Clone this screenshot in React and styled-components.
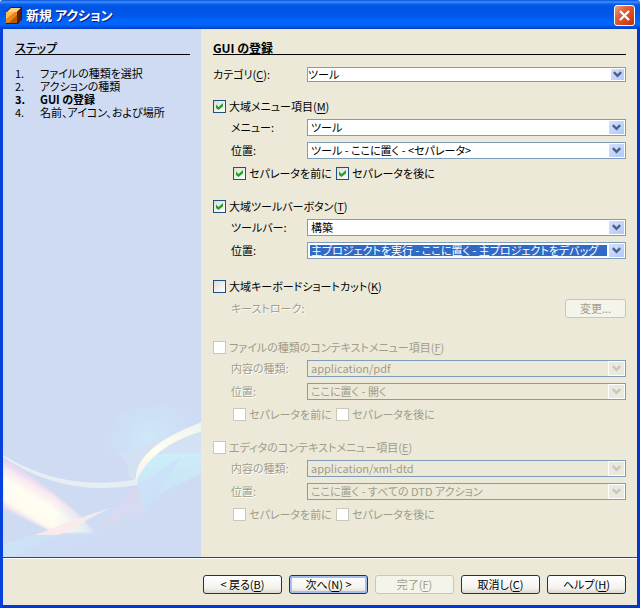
import React, { useId } from "react";
import styled, { createGlobalStyle, css } from "styled-components";

const ink = "#000";
const faded = "#9f9d89";
const face = "#ece9d8";

const GlobalStyle = createGlobalStyle`
  *, *::before, *::after { box-sizing: border-box; }
  body { margin: 0; background: #c8d6f2; }
  body, button, select, input {
    font-family: "Noto Sans CJK JP", sans-serif;
    font-size: 12px;
    font-feature-settings: "palt";
  }
  u { text-underline-offset: 2px; text-decoration-thickness: 1px; }
`;

const Window = styled.div`
  display: flex;
  flex-direction: column;
  min-height: 100vh;
  color: ${ink};
  line-height: 13px;
  background: ${face};
  border: 3px solid #0842dc;
  border-top: 0;
  border-right-color: #0535d0;
  border-bottom-color: #0338d8;
  border-radius: 4px 4px 0 0;
`;

const TitleBar = styled.header`
  display: flex;
  align-items: center;
  gap: 4px;
  height: 29px;
  margin: 0 -3px;
  padding: 1px 5px 0 6px;
  border-radius: 4px 4px 0 0;
  background: linear-gradient(#0a50d8 0, #3c93ff 2px, #0a62f0 4px, #0054e3 7px, #0058ea 15px, #0066ff 22px, #0064fa 25px, #0046d0 28px, #003fc4 29px);
`;

const WindowTitle = styled.h1`
  flex: 1;
  margin: 0;
  color: #fff;
  font-size: 13px;
  line-height: 16px;
  text-shadow: 1px 1px 0 #0a1883;
`;

const CloseButton = styled.button`
  display: grid;
  place-items: center;
  width: 21px;
  height: 21px;
  padding: 0;
  border: 1px solid #fff;
  border-radius: 3px;
  background: linear-gradient(135deg, #f0a088, #e1603a 35%, #d8441a 70%, #b83010);
`;

const Body = styled.div`
  display: flex;
  flex: 1;
`;

const Sidebar = styled.aside`
  display: flex;
  flex-direction: column;
  flex: 0 0 198px;
  padding-top: 12px;
  background: #cfdbf3;
`;

const Heading = styled.h2`
  height: 14px;
  margin: 0;
  border-bottom: 1px solid #000;
  font-size: 12px;
  line-height: 13px;
  font-weight: ${(p) => (p.$light ? 500 : 700)};
`;

const Steps = styled.section`
  padding: 0 11px 0 12px;
`;

const StepList = styled.ol`
  list-style: none;
  margin: 12px 0 0;
  padding: 0;
`;

const Step = styled.li`
  display: grid;
  grid-template-columns: 25px 1fr;
  font-size: 11px;
  white-space: nowrap;
  font-weight: ${(p) => (p.$current ? 700 : 400)};
`;

const Swoosh = styled.svg`
  display: block;
  width: 100%;
  margin-top: auto;
`;

const Main = styled.main`
  flex: 1;
  min-width: 0;
  padding: 12px 11px 16px 12px;
`;

const Field = styled.div`
  display: grid;
  grid-template-columns: ${(p) => (p.$top ? "94px" : "76px")} 1fr;
  align-items: center;
  margin-top: ${(p) => (p.$top ? 12 : 6)}px;
  margin-left: ${(p) => (p.$top ? 0 : 18)}px;
`;

const FieldLabel = styled.label`
  font-size: 11px;
  white-space: nowrap;
  ${(p) => p.$off && css`color: ${faded}; text-shadow: 1px 1px 0 #fff;`}
`;

const SelectFrame = styled.div`
  position: relative;
  display: flex;
  height: ${(p) => (p.$short ? 15 : 17)}px;
  border: 1px solid #7f9db9;
  background: ${(p) => (p.$off ? face : "#fff")};
`;

const Select = styled.select`
  appearance: none;
  width: 100%;
  height: 100%;
  margin: 0;
  padding: 0 18px 0 ${(p) => (p.$short ? 0 : 3)}px;
  border: 0;
  outline: 0;
  border-radius: 0;
  font-size: 11px;
  line-height: 13px;
  color: ${ink};
  background: transparent;
  opacity: 1;
  &:disabled { color: ${faded}; opacity: 1; }
  ${(p) => p.$active && css`
    color: #fff;
    padding: 0 0 0 1px;
    margin: 2px 18px 2px 2px;
    width: calc(100% - 20px);
    height: 11px;
    line-height: 11px;
    background: #316ac5;
  `}
`;

const ArrowBox = styled.span`
  position: absolute;
  top: 0;
  right: 0;
  bottom: 0;
  display: grid;
  place-items: center;
  width: ${(p) => (p.$short ? 14 : 17)}px;
  border: solid #fff;
  border-width: ${(p) => (p.$short ? "1px 1px 1px 0" : "1px")};
  background: ${(p) => (p.$off ? "#ebe9dd" : "linear-gradient(135deg, #d5e1fd, #b3c8f7)")};
  color: ${(p) => (p.$off ? "#c8c7bb" : "#4d6185")};
  pointer-events: none;
`;

const Group = styled.fieldset`
  min-width: 0;
  margin: ${(p) => p.$space}px 0 0;
  padding: 0;
  border: 0;
`;

const CheckLabel = styled.label`
  display: flex;
  align-items: center;
  gap: 3px;
  height: 13px;
  font-size: 11px;
  white-space: nowrap;
  color: ${(p) => (p.$off ? faded : ink)};
`;

const CheckInput = styled.input`
  appearance: none;
  flex: none;
  display: grid;
  place-items: center;
  width: 13px;
  height: 13px;
  margin: 0;
  border: 1px solid #1c5180;
  background: linear-gradient(135deg, #dcdcd7, #fff);
  &:checked::before {
    content: "";
    width: 7px;
    height: 7px;
    background: #21a121;
    clip-path: polygon(0 22%, 36% 56%, 100% 0, 100% 46%, 36% 100%, 0 70%);
  }
  &:disabled { border-color: #cac8bb; background: #fff; }
`;

const CheckPair = styled.div`
  display: grid;
  grid-template-columns: 103px 1fr;
  margin: 8px 0 0 20px;
`;

const Button = styled.button`
  flex: none;
  width: ${(p) => (p.$small ? 61 : 79)}px;
  height: 19px;
  padding: 0;
  border: 1px solid #003c74;
  border-radius: 3px;
  color: ${ink};
  font-size: 11px;
  line-height: 15px;
  white-space: nowrap;
  background: linear-gradient(#fff, #f4f3ee 70%, #dcd8cc);
  justify-self: end;
  ${(p) => p.$primary && css`box-shadow: inset 0 0 0 2px #a5bef0;`}
  &:disabled { color: ${faded}; border-color: #c9c7ba; background: #f5f4ea; }
`;

const Footer = styled.footer`
  display: flex;
  justify-content: flex-end;
  gap: 7px;
  padding: 17px 11px 11px;
  border-top: 1px solid #444;
  box-shadow: inset 0 1px 0 #fff;
`;

function Mnemonic({ text, letter, colon }) {
  return <span>{text}(<u>{letter}</u>){colon && ":"}</span>;
}

function BoxIcon() {
  return (
    <svg width="16" height="17" viewBox="0 0 16 17" aria-hidden="true">
      <path d="M0 5 5 0h11v12l-4 5H0z" fill="#3c1b08" />
      <path d="M1 5 5 1h10l-4 4z" fill="#ffd28a" />
      <path d="M0 5h11v11H0z" fill="#e98618" />
      <path d="M0 5h9L0 12z" fill="#ffb94c" />
      <path d="M3 16 11 8v8z" fill="#bd5708" />
      <path d="m11 5 4-4v11l-4 4z" fill="#542508" />
    </svg>
  );
}

function CloseIcon() {
  return (
    <svg width="13" height="13" viewBox="0 0 13 13" aria-hidden="true">
      <path d="m2 2 9 9m0-9-9 9" stroke="#fff" strokeWidth="2.2" />
    </svg>
  );
}

function Chevron() {
  return (
    <svg width="9" height="7" viewBox="0 0 9 7" aria-hidden="true">
      <path d="m0.8 1.2 3.7 3.7 3.7-3.7" fill="none" stroke="currentColor" strokeWidth="2.4" />
    </svg>
  );
}

function SwooshArt() {
  return (
    <Swoosh viewBox="0 0 198 156" aria-hidden="true">
      <defs>
        <linearGradient id="beam" gradientUnits="userSpaceOnUse" x1="42" y1="80" x2="18" y2="120">
          <stop offset="0" stopColor="#e6cff0" stopOpacity=".5" />
          <stop offset=".22" stopColor="#fbeaf0" />
          <stop offset=".45" stopColor="#fffff2" />
          <stop offset=".8" stopColor="#fffbf0" />
          <stop offset="1" stopColor="#ecd2ef" stopOpacity=".6" />
        </linearGradient>
        <linearGradient id="beamFade" x1="0" x2="1">
          <stop offset=".5" stopColor="#fff" />
          <stop offset="1" stopColor="#fff" stopOpacity=".15" />
        </linearGradient>
        <mask id="beamMask"><path d="M0 45h100v95H0z" fill="url(#beamFade)" /></mask>
        <linearGradient id="cyan" x1="0" y1="0" x2=".3" y2="1">
          <stop offset="0" stopColor="#cbf1f9" />
          <stop offset="1" stopColor="#cbe3f8" stopOpacity=".7" />
        </linearGradient>
        <radialGradient id="glow" gradientUnits="userSpaceOnUse" cx="148" cy="40" r="58">
          <stop offset="0" stopColor="#cdeaf9" />
          <stop offset="1" stopColor="#cbdff8" stopOpacity="0" />
        </radialGradient>
        <linearGradient id="ribbon" x1="0" y1="1" x2="1" y2="0">
          <stop offset="0" stopColor="#f8efec" />
          <stop offset=".4" stopColor="#fffff2" />
          <stop offset="1" stopColor="#eef5f0" />
        </linearGradient>
        <filter id="soft"><feGaussianBlur stdDeviation="1" /></filter>
      </defs>
      <path d="M90 52 116 10 198 0v24Q160 34 122 52z" fill="url(#glow)" filter="url(#soft)" />
      <path d="M0 142 110 107 198 70 Q130 125 54 154L0 156z" fill="#cbdff5" opacity=".35" />
      <path d="M0 143 34 133 76 123 14 154 0 156z" fill="#c9e6f9" opacity=".6" />
      <path d="M122 51Q160 34 198 24v30l-54 4-10 25-10-10Q130 60 112 52z" fill="#d3e3f1" opacity=".8" />
      <path d="M134 82Q134 64 148 55 170 51 198 52v21l-41 19-17 15z" fill="url(#cyan)" />
      <path d="M134 84 178 56 148 103 134 140 141 107z" fill="#cbe0f8" opacity=".7" />
      <path d="M92 132 134 84 141 107 136 120 132 110 96 132z" fill="#e2d8f0" opacity=".5" />
      <g mask="url(#beamMask)">
        <path d="M0 55 Q37 80 74 112L92 132H52L0 107z" fill="url(#beam)" filter="url(#soft)" />
      </g>
      <path d="M32 134Q74 117 114 105 96 111 78 123 67 130 55 134z" fill="#fbeaea" opacity=".9" />
      <path d="M0 54Q62 92 134 78L135 84Q60 97 0 56z" fill="#ebf2f4" opacity=".8" />
      <path d="M133 79Q132 46 198 22v8Q150 45 133 79z" fill="url(#ribbon)" stroke="#f5f4ed" strokeWidth="1" />
    </Swoosh>
  );
}

function SelectField({ label, value, off, short, active, top }) {
  const id = useId();
  return (
    <Field $top={top}>
      <FieldLabel htmlFor={id} $off={off}>{label}</FieldLabel>
      <SelectFrame $off={off} $short={short}>
        <Select id={id} disabled={off} $short={short} $active={active}>
          <option>{value}</option>
        </Select>
        <ArrowBox $off={off} $short={short}><Chevron /></ArrowBox>
      </SelectFrame>
    </Field>
  );
}

function Check({ children, on, off }) {
  return (
    <CheckLabel $off={off}>
      <CheckInput type="checkbox" defaultChecked={on} disabled={off} />
      {children}
    </CheckLabel>
  );
}

function Separators({ on, off }) {
  return (
    <CheckPair>
      <Check on={on} off={off}>セパレータを前に</Check>
      <Check on={on} off={off}>セパレータを後に</Check>
    </CheckPair>
  );
}

const steps = ["ファイルの種類を選択", "アクションの種類", "GUI の登録", "名前、アイコン、および場所"];

export default function App() {
  return (
    <>
      <GlobalStyle />
      <Window>
        <TitleBar>
          <BoxIcon />
          <WindowTitle>新規 アクション</WindowTitle>
          <CloseButton type="button" aria-label="閉じる"><CloseIcon /></CloseButton>
        </TitleBar>
        <Body>
          <Sidebar>
            <Steps>
              <Heading $light>ステップ</Heading>
              <StepList>
                {steps.map((step, i) => (
                  <Step key={step} $current={i === 2}>
                    <span>{i + 1}.</span>
                    <span>{step}</span>
                  </Step>
                ))}
              </StepList>
            </Steps>
            <SwooshArt />
          </Sidebar>
          <Main>
            <Heading>GUI の登録</Heading>
            <SelectField top short label={<Mnemonic text="カテゴリ" letter="C" colon />} value="ツール" />
            <Group $space={18}>
              <Check on><Mnemonic text="大域メニュー項目" letter="M" /></Check>
              <SelectField label="メニュー:" value="ツール" />
              <SelectField label="位置:" value="ツール - ここに置く - <セパレータ>" />
              <Separators on />
            </Group>
            <Group $space={20}>
              <Check on><Mnemonic text="大域ツールバーボタン" letter="T" /></Check>
              <SelectField label="ツールバー:" value="構築" />
              <SelectField active label="位置:" value="主プロジェクトを実行 - ここに置く - 主プロジェクトをデバッグ" />
            </Group>
            <Group $space={21}>
              <Check><Mnemonic text="大域キーボードショートカット" letter="K" /></Check>
              <Field>
                <FieldLabel as="span" $off>キーストローク:</FieldLabel>
                <Button type="button" $small disabled>変更...</Button>
              </Field>
            </Group>
            <Group $space={23}>
              <Check off><Mnemonic text="ファイルの種類のコンテキストメニュー項目" letter="F" /></Check>
              <SelectField off label="内容の種類:" value="application/pdf" />
              <SelectField off label="位置:" value="ここに置く - 開く" />
              <Separators off />
            </Group>
            <Group $space={20}>
              <Check off><Mnemonic text="エディタのコンテキストメニュー項目" letter="E" /></Check>
              <SelectField off label="内容の種類:" value="application/xml-dtd" />
              <SelectField off label="位置:" value="ここに置く - すべての DTD アクション" />
              <Separators off />
            </Group>
          </Main>
        </Body>
        <Footer>
          <Button type="button">&lt; 戻る(<u>B</u>)</Button>
          <Button type="button" $primary>次へ(<u>N</u>) &gt;</Button>
          <Button type="button" disabled>完了(<u>F</u>)</Button>
          <Button type="button">取消し(<u>C</u>)</Button>
          <Button type="button">ヘルプ(<u>H</u>)</Button>
        </Footer>
      </Window>
    </>
  );
}
